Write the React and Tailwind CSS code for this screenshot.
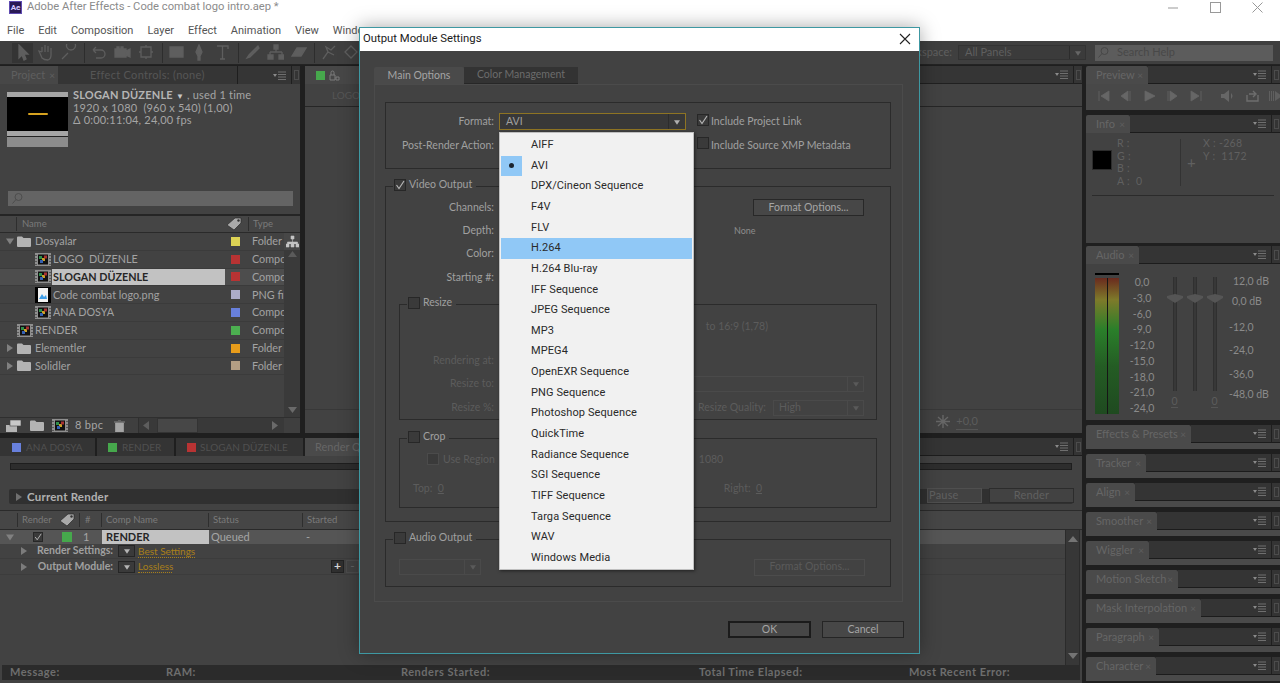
import React from "react";

const Tri = ({ dir = "r", c = "#7d7d7d", s = 8 }) => (
  <svg width={s} height={s} viewBox="0 0 8 8" className="shrink-0">
    {dir === "r" ? <path d="M1 0 L7 4 L1 8Z" fill={c} /> : <path d="M0 1.5 L8 1.5 L4 7.5Z" fill={c} />}
  </svg>
);

const MenuGlyph = () => (
  <svg width="14" height="9" viewBox="0 0 14 9" className="shrink-0">
    <path d="M0 3 L4 3 L2 6Z" fill="#8a8a8a" />
    <path d="M5 1h8M5 3.5h8M5 6h8M5 8.5h8" stroke="#6f6f6f" strokeWidth="1" />
  </svg>
);

const Grip = () => (
  <div className="w-[9px] h-full border-l border-[#1f1f1f] flex items-center justify-center shrink-0 ml-[4px]">
    <div className="w-[5px] h-[10px] border border-[#4c4c4c]" />
  </div>
);

const PanelTab = ({ w, children }) => (
  <div className="flex h-[18px] shrink-0 bg-[#1f1f1f]">
    <div className="bg-[#4a4a4a] rounded-t-[2px] h-[18px] flex items-center pl-[10px] shrink-0 text-[#666666] text-[11px] whitespace-nowrap" style={{ width: w }}>
      {children}
      <span className="ml-auto mr-[5px] text-[#5e5e5e] text-[10px]">×</span>
    </div>
    <div className="flex-1 bg-[#343434] border-b border-[#1c1c1c] flex items-center justify-end">
      <MenuGlyph />
      <Grip />
    </div>
  </div>
);

const RightStack = ({ title, w }) => (
  <div className="h-[24px] bg-[#4a4a4a] shrink-0 mb-[5px] overflow-hidden">
    <PanelTab w={w}>{title}</PanelTab>
  </div>
);

const Folder = () => (
  <svg width="14" height="11" viewBox="0 0 14 11" className="shrink-0">
    <path d="M0 1.5 Q0 .5 1 .5 H5 L6.5 2 H13 Q14 2 14 3 V10 Q14 11 13 11 H1 Q0 11 0 10Z" fill="#b4b4b4" />
  </svg>
);

const CompIcon = () => (
  <svg width="16" height="13" viewBox="0 0 16 13" className="shrink-0">
    <rect width="16" height="13" fill="#8f8f8f" />
    <rect x="3" y="1.5" width="10" height="10" fill="#111" />
    <rect x="4" y="3" width="3" height="3" fill="#2f8f4a" />
    <rect x="7" y="5" width="3" height="3" fill="#c9a227" />
    <rect x="9" y="2.5" width="3" height="3" fill="#a83232" />
    <rect x="5" y="7" width="3" height="3" fill="#3560b0" />
    <path d="M1 2v1M1 5v1M1 8v1M1 11v1M15 2v1M15 5v1M15 8v1M15 11v1" stroke="#222" />
  </svg>
);

const PngIcon = () => (
  <svg width="16" height="16" viewBox="0 0 16 16" className="shrink-0">
    <rect width="16" height="16" fill="#000" />
    <rect x="3" y="1" width="10" height="14" fill="#f2f2f2" />
    <path d="M4 12 L7 7 L9 10 L11 8 L12 12Z" fill="#3f9ee8" />
  </svg>
);

const TagIcon = () => (
  <svg width="16" height="14" viewBox="0 0 16 14" className="shrink-0">
    <path d="M1 8 L9 1 L15 1 L15 6 L8 13Z" fill="#a9a9a9" stroke="#2a2a2a" strokeWidth=".7" />
    <circle cx="12.5" cy="3.5" r="1.2" fill="#333" />
  </svg>
);

const ChkMark = ({ on, dim, size = 12 }) => (
  <span className={"inline-flex items-center justify-center shrink-0 bg-[#3a3a3a] border " + (dim ? "border-[#4b4b4b]" : "border-[#272727]")} style={{ width: size, height: size }}>
    {on && (
      <svg width="10" height="10" viewBox="0 0 10 10">
        <path d="M1.5 5 L4 8.5 L9 1" fill="none" stroke="#b5b5b5" strokeWidth="1.2" />
      </svg>
    )}
  </span>
);

const projectRows = [
  { t: "d", indent: 0, icon: "f", name: "Dosyalar", c: "#ddd355", type: "Folder" },
  { indent: 1, icon: "c", name: "LOGO  DÜZENLE", c: "#b83333", type: "Compo" },
  { indent: 1, icon: "c", name: "SLOGAN DÜZENLE", c: "#b83333", type: "Compo", sel: true },
  { indent: 1, icon: "p", name: "Code combat logo.png", c: "#acacc9", type: "PNG fil" },
  { indent: 1, icon: "c", name: "ANA DOSYA", c: "#6880dc", type: "Compo" },
  { indent: 0, icon: "c", name: "RENDER", c: "#4caf50", type: "Compo" },
  { t: "r", indent: 0, icon: "f", name: "Elementler", c: "#e89c1a", type: "Folder" },
  { t: "r", indent: 0, icon: "f", name: "Solidler", c: "#b39e84", type: "Folder" },
];

const ProjectPanel = () => (
  <div className="w-[300px] h-full bg-[#424242] flex flex-col shrink-0">
    <div className="flex h-[18px] shrink-0">
      <div className="w-[58px] bg-[#474747] flex items-center pl-[11px] text-[11px] text-[#5f5f5f]">Project<span className="ml-[4px] text-[10px]">×</span></div>
      <div className="w-[179px] bg-[#353535] flex items-center pl-[32px] text-[11px] text-[#555555] tracking-[0.3px] whitespace-nowrap">Effect Controls: (none)</div>
      <div className="flex-1 bg-[#353535] border-l border-[#1e1e1e] flex items-center justify-end"><MenuGlyph /><Grip /></div>
    </div>
    <div className="h-[99px] flex shrink-0 pl-[7px] pt-[8px] gap-[5px]">
      <div className="w-[61px] h-[55px] flex flex-col shrink-0">
        <div className="h-[5px] bg-[#a5a5a5]" />
        <div className="h-[34px] bg-black flex items-center justify-center"><div className="w-[20px] h-[2px] bg-[#d6a21f] rounded-full" /></div>
        <div className="h-[5px] bg-[#a5a5a5]" />
        <div className="h-[1px] bg-[#222222]" />
        <div className="h-[10px] bg-[#8c8c8c]" />
      </div>
      <div className="text-[11px] leading-[12px] text-[#a5a5a5] -mt-[3px] tracking-[0.2px] whitespace-pre">
        <div><b className="text-[#b5b5b5]">SLOGAN DÜZENLE</b> <span className="text-[8px] text-[#c8c8c8]">▼</span> , used 1 time</div>
        <div>1920 x 1080  (960 x 540) (1,00)</div>
        <div>Δ 0:00:11:04, 24,00 fps</div>
      </div>
    </div>
    <div className="h-[33px] shrink-0 pt-[8px] px-[8px] border-b-2 border-[#252525]">
      <div className="h-[15px] bg-[#646464] flex items-center pl-[3px] w-[285px]">
        <svg width="13" height="13" viewBox="0 0 13 13"><circle cx="7.5" cy="5" r="3.5" fill="none" stroke="#4d4d4d" /><path d="M5 7.5 L1.5 11.5" stroke="#4d4d4d" /></svg>
      </div>
    </div>
    <div className="h-[17px] flex items-center text-[9.5px] text-[#7a7a7a] bg-[#454545] border-b border-[#2a2a2a] shrink-0">
      <span className="pl-[5px] ml-[16px] border-l border-[#2e2e2e]">Name</span>
      <span className="ml-auto"><TagIcon /></span>
      <span className="ml-[6px] w-[52px] pl-[4px] border-l border-[#2e2e2e]">Type</span>
    </div>
    <div className="flex-1 flex min-h-0">
      <div className="w-[284px] flex flex-col shrink-0">
        {projectRows.map((r) => (
          <div key={r.name} className={"h-[17.8px] flex items-center border-b border-[#3b3b3b] text-[10.8px] text-[#a3a3a3] shrink-0 whitespace-pre " + (r.sel ? "bg-[#4d4d4d]" : "")}>
            <div className={r.indent ? "w-[35px] shrink-0" : "w-[17px] shrink-0"}>
              {r.t && !r.indent && <span className="flex pl-[6px]"><Tri dir={r.t} c="#808080" /></span>}
            </div>
            <div className="w-[17px] flex justify-start shrink-0">
              {r.icon === "f" ? <Folder /> : r.icon === "c" ? <CompIcon /> : <PngIcon />}
            </div>
            <div className={"h-full flex items-center pl-[1px] shrink-0 " + (r.indent ? "w-[173px] " : "w-[191px] ") + (r.sel ? "bg-[#c2c2c2] text-[#262626] font-bold" : "")}>{r.name}</div>
            <div className="w-[21px] flex justify-center shrink-0"><span className="w-[9px] h-[9px]" style={{ background: r.c }} /></div>
            <div className="overflow-hidden w-[38px] pl-[6px]">{r.type}</div>
          </div>
        ))}
      </div>
      <div className="flex-1 bg-[#3a3a3a] flex flex-col items-center justify-between pb-[4px]">
        <div className="w-full bg-[#474747] h-[17px] flex items-center justify-center">
          <svg width="13" height="13" viewBox="0 0 13 13"><path d="M5 1h3v3H5zM0 9h3v3H0zM5 9h3v3H5zM10 9h3v3h-3zM6.5 4v3M1.5 9V7h10v2" fill="#c5c5c5" stroke="#c5c5c5" strokeWidth=".6" /></svg>
        </div>
        <svg width="9" height="6" viewBox="0 0 9 6" className="-mt-[150px]"><path d="M0 6 L4.5 0 L9 6Z" fill="#5a5a5a" /></svg>
        <svg width="9" height="6" viewBox="0 0 9 6"><path d="M0 0 L9 0 L4.5 6Z" fill="#6a6a6a" /></svg>
      </div>
    </div>
    <div className="h-[16px] shrink-0 flex items-center bg-[#3f3f3f] border-t border-[#2f2f2f] pl-[6px]">
      <svg width="15" height="12" viewBox="0 0 15 12"><rect y="5" width="11" height="7" fill="#b5b5b5" /><rect x="4" width="11" height="6" fill="#c9c9c9" stroke="#444" strokeWidth=".6" /></svg>
      <span className="ml-[9px]"><Folder /></span>
      <span className="ml-[8px]"><CompIcon /></span>
      <span className="ml-[7px] w-[31px] text-[11px] text-[#a5a5a5] whitespace-nowrap tracking-[0.3px]">8 bpc</span>
      <svg width="11" height="12" viewBox="0 0 11 12" className="ml-[8px]"><path d="M0 2h11M4 0h3M1.5 3h8v9h-8z" fill="#a5a5a5" stroke="#a5a5a5" strokeWidth=".7" /></svg>
      <div className="ml-[13px] w-[146px] h-full flex items-center bg-[#393939] border-l border-[#2f2f2f]">
        <span className="ml-[4px]"><svg width="6" height="9" viewBox="0 0 6 9"><path d="M6 0 L0 4.5 L6 9Z" fill="#5d5d5d" /></svg></span>
        <div className="ml-[8px] w-[41px] h-full bg-[#474747] border border-[#333333]" />
        <span className="ml-auto mr-[6px]"><svg width="6" height="9" viewBox="0 0 6 9"><path d="M0 0 L6 4.5 L0 9Z" fill="#6a6a6a" /></svg></span>
      </div>
    </div>
  </div>
);

const ViewerPanel = () => (
  <div className="flex-1 h-full bg-[#424242] flex flex-col ml-[5px] min-w-0">
    <div className="flex h-[18px] shrink-0">
      <div className="w-[240px] bg-[#474747] flex items-center pl-[11px]">
        <span className="w-[9px] h-[9px] bg-[#46a84c]" />
        <svg width="11" height="11" viewBox="0 0 11 11" className="ml-[4px]"><path d="M1 5h5v5H1zM2 5V2.5a1.5 1.5 0 0 1 3 0V5M7 7h3v3H7z" fill="none" stroke="#7d7d7d" /></svg>
      </div>
      <div className="flex-1 bg-[#353535] flex items-center justify-end border-b border-[#202020]"><MenuGlyph /><Grip /></div>
    </div>
    <div className="h-[23px] shrink-0 border-b border-[#262626] text-[10px] text-[#565656] pl-[27px] flex items-center">LOGO</div>
    <div className="flex-1" />
    <div className="h-[24px] shrink-0 border-t border-[#383838] flex items-center justify-end pr-[104px] text-[11px] text-[#5c5c5c]">
      <svg width="14" height="13" viewBox="0 0 14 13" className="mr-[6px]"><path d="M7 0v13M0 6.5h14M2 2l10 9M12 2L2 11" stroke="#666" strokeWidth="1.4" /></svg>
      <span className="border-b border-[#555555]">+0,0</span>
    </div>
  </div>
);

const QueueRowLabel = ({ label, link }) => (
  <div className={"flex items-center border-b border-[#3c3c3c] text-[11px] shrink-0 " + (label === "Output Module:" ? "h-[16px]" : "h-[15px]")}>
    <span className="pl-[20px] w-[32px] shrink-0"><Tri c="#7c7c7c" /></span>
    <span className="w-[81px] shrink-0 text-right font-bold text-[10.5px] text-[#a0a0a0] whitespace-nowrap">{label}</span>
    <span className="ml-[5px] w-[17px] h-[12px] bg-[#3a3a3a] border border-[#252525] flex items-center justify-center shrink-0"><Tri dir="d" c="#b5b5b5" s={6} /></span>
    <span className={"ml-[3px] text-[10px] text-[#a87f1a] border-b border-dotted border-[#a87f1a] leading-[12px] whitespace-nowrap " + (label === "Output Module:" ? "w-[34px]" : "")}>{link}</span>
    {label === "Output Module:" && (
      <span className="ml-[159px] flex gap-[2px] shrink-0">
        <span className="w-[13px] h-[13px] bg-[#2f2f2f] border border-[#222222] text-[#d8d8d8] text-[12px] leading-[10px] font-bold text-center">+</span>
        <span className="w-[13px] h-[13px] border border-[#4c4c4c] text-[#666666] text-[12px] leading-[10px] text-center">-</span>
      </span>
    )}
  </div>
);

const BottomPanel = () => (
  <div className="h-[245px] mt-[5px] shrink-0 flex flex-col bg-[#424242]">
    <div className="h-[18px] flex shrink-0 bg-[#1f1f1f]">
      <div className="w-[95px] mr-[2px] bg-[#343434] flex items-center pl-[12px] text-[10px] text-[#505050] whitespace-nowrap shrink-0">
        <span className="w-[9px] h-[9px] mr-[5px] shrink-0 bg-[#6880dc]" />ANA DOSYA
      </div>
      <div className="w-[77px] mr-[2px] bg-[#343434] flex items-center pl-[11px] text-[10px] text-[#505050] whitespace-nowrap shrink-0">
        <span className="w-[9px] h-[9px] mr-[5px] shrink-0 bg-[#46a84c]" />RENDER
      </div>
      <div className="w-[127px] mr-[2px] bg-[#343434] flex items-center pl-[11px] text-[10px] text-[#505050] whitespace-nowrap shrink-0">
        <span className="w-[9px] h-[9px] mr-[4px] shrink-0 bg-[#b83333]" />SLOGAN DÜZENLE
      </div>
      <div className="w-[160px] bg-[#4a4a4a] pl-[10px] flex items-center text-[11px] text-[#666666] shrink-0 whitespace-nowrap">Render Queue</div>
      <div className="flex-1 bg-[#343434] border-b border-[#1d1d1d] flex items-center justify-end"><MenuGlyph /><Grip /></div>
    </div>
    <div className="h-[7px] shrink-0" />
    <div className="h-[7px] mx-[10px] bg-[#2d2d2d] border border-[#1e1e1e] shrink-0" />
    <div className="h-[19px] shrink-0" />
    <div className="h-[15px] mx-[9px] bg-[#303030] rounded-[2px] shrink-0 flex items-center pl-[6px] gap-[4px] text-[11.5px] font-bold text-[#b0b0b0] tracking-[0.2px] relative">
      <Tri c="#707070" />Current Render
      <div className="absolute right-[-1px] top-[-1px] flex gap-[7px] text-[11px] font-normal text-[#606060]">
        <span className="w-[55px] h-[15px] border border-[#4f4f4f] bg-[#424242] flex items-center pl-[1px]">Pause</span>
        <span className="w-[85px] h-[15px] border border-[#2c2c2c] bg-[#424242] flex items-center justify-center">Render</span>
      </div>
    </div>
    <div className="h-[7px] shrink-0 border-b border-[#2b2b2b]" />
    <div className="h-[19px] shrink-0 bg-[#464646] border-b border-[#2a2a2a] flex items-center text-[9.5px] text-[#7a7a7a] whitespace-nowrap">
      <span className="ml-[17px] w-[40px] pl-[4px] border-l border-[#2e2e2e]">Render</span>
      <span className="ml-[2px]"><TagIcon /></span>
      <span className="ml-[4px] w-[22px] pl-[5px] border-l border-[#2e2e2e]">#</span>
      <span className="w-[107px] pl-[4px] border-l border-[#2e2e2e]">Comp Name</span>
      <span className="w-[94px] pl-[4px] border-l border-[#2e2e2e]">Status</span>
      <span className="pl-[4px] border-l border-[#2e2e2e]">Started</span>
    </div>
    <div className="flex-1 flex min-h-0">
      <div className="flex-1 min-w-0 flex flex-col">
        <div className="h-[14px] bg-[#555555] flex items-center text-[11px] text-[#a5a5a5] shrink-0">
          <span className="pl-[6px] w-[33px] shrink-0"><Tri dir="d" c="#808080" /></span>
          <ChkMark on size={10} />
          <span className="ml-[19px] w-[10px] h-[10px] bg-[#46a84c] shrink-0" />
          <span className="ml-[11px] w-[19px]">1</span>
          <span className="w-[107px] h-full bg-[#c2c2c2] text-[#262626] font-bold flex items-center pl-[4px]">RENDER</span>
          <span className="ml-[2px] w-[95px]">Queued</span>
          <span>-</span>
        </div>
        <QueueRowLabel label="Render Settings:" link="Best Settings" />
        <QueueRowLabel label="Output Module:" link="Lossless" />
        <div className="flex-1" />
      </div>
      <div className="w-[15px] bg-[#373737] border-x border-[#2b2b2b] flex flex-col items-center justify-between py-[6px] mr-[2px] shrink-0">
        <svg width="10" height="6" viewBox="0 0 10 6"><path d="M0 6 L5 0 L10 6Z" fill="#747474" /></svg>
        <svg width="10" height="6" viewBox="0 0 10 6"><path d="M0 0 L10 0 L5 6Z" fill="#747474" /></svg>
      </div>
    </div>
    <div className="h-[15px] bg-[#2b2b2b] mx-[2px] mb-[3px] shrink-0 flex items-center text-[11px] font-bold text-[#6e6e6e] whitespace-nowrap tracking-[0.5px]">
      <span className="pl-[8px] w-[164px]">Message:</span>
      <span className="w-[235px]">RAM:</span>
      <span className="w-[298px]">Renders Started:</span>
      <span className="w-[210px]">Total Time Elapsed:</span>
      <span>Most Recent Error:</span>
    </div>
  </div>
);

const Transport = () => (
  <div className="flex items-center h-[24px] pl-[12px] text-[#666666]">
    {[
      "M1 1v10M11 1 L3 6 L11 11Z", "M9 1v10M7 1 L0 6 L7 11Z", "M1 1 L11 6 L1 11Z", "M1 1v10M3 1 L10 6 L3 11Z", "M11 1v10M1 1 L9 6 L1 11Z",
    ].map((d, i) => (
      <svg key={i} width="12" height="12" viewBox="0 0 12 12" className="mr-[11px] shrink-0"><path d={d} fill="#666666" stroke="#666666" strokeWidth=".8" /></svg>
    ))}
    <svg width="13" height="12" viewBox="0 0 13 12" className="ml-[8px] shrink-0"><path d="M0 4h3L8 0v12L3 8H0zM10 3q3 3 0 6" fill="#666666" /></svg>
    <svg width="13" height="12" viewBox="0 0 13 12" className="ml-[12px] shrink-0"><path d="M1 5v6h11V5M3 4h6M7 1l3 3-3 3" fill="none" stroke="#6e6e6e" strokeWidth="1.4" /></svg>
    <svg width="13" height="12" viewBox="0 0 13 12" className="ml-[10px] shrink-0"><path d="M0 1h1v10H0zM2 1h1v10H2zM4 1h1v10H4zM6 1l7 5-7 5z" fill="#5f5f5f" /></svg>
  </div>
);

const RightColumn = () => (
  <div className="w-[194px] h-full ml-[4px] flex flex-col shrink-0">
    <div className="h-[44px] bg-[#484848] mb-[5px] shrink-0">
      <PanelTab w={62}>Preview</PanelTab>
      <Transport />
    </div>
    <div className="h-[128px] bg-[#424242] mb-[3px] shrink-0">
      <PanelTab w={44}>Info</PanelTab>
      <div className="flex h-[63px] mx-[6px] border-b border-[#2b2b2b] text-[#606060] text-[10.5px] tracking-[0.3px]">
        <div className="w-[20px] h-[20px] bg-black border border-[#2c2c2c] mt-[17px] shrink-0" />
        <div className="ml-[5px] pt-[4px] leading-[12.5px] w-[63px] shrink-0 whitespace-pre">
          <div>R :</div><div>G :</div><div>B :</div><div>A :  0</div>
        </div>
        <div className="border-l border-[#333333] h-[47px] mt-[6px] pl-[6px] pt-[15px] w-[23px] shrink-0 text-[15px] leading-[16px]">+</div>
        <div className="pt-[4px] leading-[12.5px] whitespace-pre">
          <div>X : -268</div><div>Y :  1172</div>
        </div>
      </div>
    </div>
    <div className="h-[174px] bg-[#424242] mb-[5px] shrink-0">
      <PanelTab w={53}>Audio</PanelTab>
      <div className="flex h-[156px] text-[10.5px] text-[#8a8a8a] whitespace-nowrap">
        <div className="ml-[9px] w-[24px] shrink-0 pt-[9px]">
          <div className="h-[2px] bg-black" />
          <div className="mt-[3px] h-[136px] relative bg-[linear-gradient(180deg,#6a2a1e_0%,#7e7a2a_16%,#2a7f2a_38%,#245c24_65%,#1f4a20_100%)] flex justify-center">
            <div className="w-[1px] bg-[#161616]" />
          </div>
        </div>
        <div className="w-[30px] ml-[8px] shrink-0 pt-[12px] h-[150px] flex flex-col justify-between items-center leading-[12px]">
          {["0,0", "-3,0", "-6,0", "-9,0", "-12,0", "-15,0", "-18,0", "-21,0", "-24,0"].map((n) => <span key={n}>{n}</span>)}
        </div>
        <div className="flex ml-[15px] gap-[15px] pt-[13px] shrink-0">
          {[0, 1, 2].map((i) => (
            <div key={i} className="w-[5px] flex flex-col items-center">
              <div className="h-[114px] w-[4px] bg-[#383838] border-x border-[#303030] relative">
                <svg width="16" height="9" viewBox="0 0 16 9" className="absolute left-[-7px] top-[17px]"><path d="M0 2 L8 0 L16 2 L16 4 L8 9 L0 4Z" fill="#555555" /></svg>
              </div>
              {i !== 1 && <span className="mt-[5px] text-[#5c5c5c] border-b border-[#555555] leading-[11px]">0</span>}
            </div>
          ))}
        </div>
        <div className="ml-[12px] pt-[11px] leading-[12px] shrink-0">
          <div className="pl-[4px] h-[20px]">12,0 dB</div>
          <div className="pl-[3px] h-[26px]">0,0 dB</div>
          <div className="h-[23px]">-12,0</div>
          <div className="h-[24px]">-24,0</div>
          <div className="h-[20px]">-36,0</div>
          <div>-48,0 dB</div>
        </div>
      </div>
    </div>
    <RightStack title="Effects & Presets" w={105} />
    <RightStack title="Tracker" w={60} />
    <RightStack title="Align" w={49} />
    <RightStack title="Smoother" w={71} />
    <RightStack title="Wiggler" w={63} />
    <RightStack title="Motion Sketch" w={92} />
    <RightStack title="Mask Interpolation" w={115} />
    <RightStack title="Paragraph" w={73} />
    <RightStack title="Character" w={70} />
  </div>
);

const toolIcons = [
  ["M5 1 L5 14 L8 11 L10 16 L12 15 L10 10 L14 10Z", 1, true],
  ["M5 8V3M8 8V1M11 8V2M14 9V4M5 8 L2 7 L5 14 Q7 16 11 16 Q14 15 14 11V9", 0],
  ["M11 6a4.5 4.5 0 1 0-.01 0M8 9 L2 15", 0],
  ["M3 6h8a4 4 0 0 1 0 8H6M3 6 L6 3M3 6 L6 9", 0],
  ["M1 5h11v8H1zM12 7l4-2v8l-4-2zM3 3h2v2H3zM7 3h2v2H7z", 1],
  ["M3 3h10v10H3zM1 8h2M13 8h2M8 1v2M8 13v2", 0],
  ["M2 3h13v10H2z", 1],
  ["M8 1 L11 8 L9 12H7L5 8ZM7 13h2v3H7z", 1],
  ["M3 2h11v3M8.5 2v13M6 15h5", 0],
  ["M14 2 L5 11 L3 14 L6 13 L15 4Z", 1],
  ["M7 1h4v4H7zM9 5v3M3 8h12M3 8v3M15 8v3M1 11h5v4H1zM12 11h5v4h-5z", 1],
  ["M7 4h9l-5 8H2Z", 1],
  ["M3 15 L8 8 L6 3 L11 6 L15 2 M8 8 L14 11", 0],
  ["M2 8 L8 2 L14 8 L8 14Z", 0],
];

const ToolIcon = ({ d, fill, active }) => (
  <span className={"w-[21px] h-[20px] flex items-center justify-center shrink-0 " + (active ? "bg-[#343434]" : "")}>
    <svg width="17" height="17" viewBox="0 0 17 17"><path d={d} fill={fill ? "#5e5e5e" : "none"} stroke="#5e5e5e" strokeWidth="1.3" /></svg>
  </span>
);

const Toolbar = () => (
  <div className="h-[24px] bg-[#3f3f3f] flex items-center shrink-0 pl-[12px] border-b border-[#232323] whitespace-nowrap">
    <div className="flex gap-[2px] shrink-0">{toolIcons.slice(0, 3).map((t, i) => <ToolIcon key={i} d={t[0]} fill={t[1]} active={t[2]} />)}</div>
    <div className="flex gap-[3px] ml-[5px] pl-[3px] border-l border-[#2d2d2d] shrink-0">{toolIcons.slice(3, 6).map((t, i) => <ToolIcon key={i} d={t[0]} fill={t[1]} />)}</div>
    <div className="flex gap-[2px] ml-[5px] pl-[3px] border-l border-[#2d2d2d] shrink-0">{toolIcons.slice(6, 9).map((t, i) => <ToolIcon key={i} d={t[0]} fill={t[1]} />)}</div>
    <div className="flex gap-[2px] ml-[5px] pl-[3px] border-l border-[#2d2d2d] shrink-0">{toolIcons.slice(9, 12).map((t, i) => <ToolIcon key={i} d={t[0]} fill={t[1]} />)}</div>
    <div className="flex gap-[2px] ml-[5px] pl-[3px] border-l border-[#2d2d2d] shrink-0">{toolIcons.slice(12, 14).map((t, i) => <ToolIcon key={i} d={t[0]} fill={t[1]} />)}</div>
    <div className="ml-auto flex items-center shrink-0 pr-[7px]">
      <span className="text-[11px] text-[#5f5f5f] mr-[6px]">Workspace:</span>
      <div className="w-[128px] h-[15px] bg-[#3b3b3b] border border-[#333333] flex items-center pl-[6px] text-[11px] text-[#5f5f5f]">
        All Panels
        <span className="ml-auto w-[16px] h-[13px] border-l border-[#2c2c2c] flex items-center justify-center"><Tri dir="d" c="#666666" s={6} /></span>
      </div>
      <div className="ml-[9px] w-[178px] h-[16px] bg-[#5c5c5c] flex items-center pl-[2px] text-[11px] text-[#484848]">
        <svg width="13" height="13" viewBox="0 0 13 13" className="mr-[7px]"><circle cx="7.5" cy="5" r="3.5" fill="none" stroke="#474747" /><path d="M5 7.5 L1.5 11.5" stroke="#474747" /></svg>
        Search Help
      </div>
    </div>
  </div>
);

const formats = ["AIFF", "AVI", "DPX/Cineon Sequence", "F4V", "FLV", "H.264", "H.264 Blu-ray", "IFF Sequence", "JPEG Sequence", "MP3", "MPEG4", "OpenEXR Sequence", "PNG Sequence", "Photoshop Sequence", "QuickTime", "Radiance Sequence", "SGI Sequence", "TIFF Sequence", "Targa Sequence", "WAV", "Windows Media"];

const Dropdown = () => (
  <div className="absolute left-[139px] top-[104px] w-[195px] h-[438px] bg-[#f1f1f1] border border-[#bfbfbf] shadow-[1px_1px_3px_rgba(0,0,0,0.5)] px-[1px] pt-[2px] flex flex-col font-['Roboto',sans-serif] text-[11px] tracking-[0.1px] text-[#2a2a2a]">
    {formats.map((f) => (
      <div key={f} className={"h-[20.65px] flex items-center shrink-0 " + (f === "H.264" ? "bg-[#90c8f6]" : "")}>
        <span className={"w-[21px] h-full flex items-center justify-center shrink-0 " + (f === "AVI" ? "bg-[#90c8f6]" : "")}>
          {f === "AVI" && <span className="w-[5px] h-[5px] rounded-full bg-[#1b2530]" />}
        </span>
        <span className="pl-[9px] whitespace-nowrap">{f}</span>
      </div>
    ))}
  </div>
);

const Label = ({ children, w = "w-[108px]", dim }) => (
  <span className={w + " shrink-0 text-right whitespace-nowrap " + (dim ? "text-[#5c5c5c]" : "text-[#a0a0a0]")}>{children}</span>
);

const DimBtn = ({ children, dim }) => (
  <span className={"w-[111px] h-[17px] flex items-center justify-center shrink-0 border " + (dim ? "text-[#5a5a5a] border-[#4c4c4c] bg-[#424242]" : "text-[#a5a5a5] border-[#282828] bg-[#474747]")}>{children}</span>
);

const DimSel = ({ w, children }) => (
  <span className={w + " h-[16px] border border-[#4a4a4a] flex items-center pl-[5px] text-[#5c5c5c] shrink-0"}>
    {children}
    <span className="ml-auto w-[16px] h-[14px] border-l border-[#4a4a4a] flex items-center justify-center"><Tri dir="d" c="#5a5a5a" s={6} /></span>
  </span>
);

const Legend = ({ on, children }) => (
  <div className="absolute left-[7px] top-[-10px] flex items-center gap-[3px] bg-[#424242] pr-[4px] pl-[1px] text-[#a0a0a0]">
    <ChkMark on={on} />{children}
  </div>
);

const Dialog = () => (
  <div className="absolute left-[359px] top-[27px] w-[561px] h-[627px] bg-[#424242] border border-[#3e98a2] shadow-[0_0_18px_rgba(0,0,0,0.35)] flex flex-col font-['Lato',sans-serif] text-[10.5px]">
    <div className="h-[23px] bg-white flex items-center pl-[3px] pb-[1px] text-[11.3px] text-[#1a1a1a] font-['Roboto',sans-serif] shrink-0">
      Output Module Settings
      <svg width="12" height="12" viewBox="0 0 12 12" className="ml-auto mr-[8px]"><path d="M1 1 L11 11M11 1 L1 11" stroke="#222222" strokeWidth="1.1" /></svg>
    </div>
    <div className="flex ml-[14px] mt-[16px] h-[17px] shrink-0">
      <div className="w-[90px] bg-[#4a4a4a] flex items-center justify-center text-[#a5a5a5] rounded-t-[2px]">Main Options</div>
      <div className="w-[114px] bg-[#333333] flex items-center justify-center text-[#6c6c6c] border-b border-[#272727]">Color Management</div>
    </div>
    <div className="ml-[14px] w-[529px] h-[518px] border border-[#4b4b4b] pl-[10px] pr-[11px] pt-[17px] shrink-0">
      <div className="h-[67px] border border-[#2b2b2b] flex flex-col pt-[6px] text-[#a0a0a0]">
        <div className="h-[25px] flex items-center shrink-0">
          <Label>Format:</Label>
          <div className="ml-[5px] w-[187px] h-[17px] border border-[#8e7423] bg-[#383838] flex items-center pl-[6px] text-[#a0a0a0] shrink-0">
            AVI
            <span className="ml-auto w-[17px] h-[15px] border-l border-[#2c2c2c] flex items-center justify-center"><Tri dir="d" c="#b0b0b0" s={6} /></span>
          </div>
          <span className="ml-[11px]"><ChkMark on /></span>
          <span className="ml-[2px] whitespace-nowrap">Include Project Link</span>
        </div>
        <div className="h-[23px] flex items-center shrink-0">
          <Label>Post-Render Action:</Label>
          <span className="ml-[203px]"><ChkMark /></span>
          <span className="ml-[2px] whitespace-nowrap">Include Source XMP Metadata</span>
        </div>
      </div>
      <div className="mt-[17px] h-[336px] border border-[#2b2b2b] relative px-[13px] pt-[9px]">
        <Legend on>Video Output</Legend>
        <div className="h-[23px] flex items-center -ml-[13px]"><Label>Channels:</Label><span className="ml-auto -mr-[13px] pr-[26px]"><DimBtn>Format Options...</DimBtn></span></div>
        <div className="h-[23px] flex items-center -ml-[13px] text-[#8d8d8d]"><Label>Depth:</Label><span className="ml-[240px] text-[9px]">None</span></div>
        <div className="h-[24px] flex items-center -ml-[13px]"><Label>Color:</Label></div>
        <div className="h-[23px] flex items-center -ml-[13px]"><Label>Starting #:</Label></div>
        <div className="mt-[15px] h-[116px] border border-[#2b2b2b] relative text-[#5c5c5c]">
          <Legend>Resize</Legend>
          <div className="h-[44px] flex items-center justify-end pr-[108px] whitespace-nowrap">to 16:9 (1,78)</div>
          <div className="h-[23px] flex items-center"><Label w="w-[94px]" dim>Rendering at:</Label></div>
          <div className="h-[24px] flex items-center"><Label w="w-[94px]" dim>Resize to:</Label><span className="ml-auto pr-[12px]"><DimSel w="w-[180px]" /></span></div>
          <div className="h-[23px] flex items-center"><Label w="w-[94px]" dim>Resize %:</Label><span className="ml-auto whitespace-nowrap pr-[7px]">Resize Quality:</span><span className="pr-[12px]"><DimSel w="w-[91px]">High</DimSel></span></div>
        </div>
        <div className="mt-[18px] h-[70px] border border-[#2b2b2b] relative text-[#5c5c5c]">
          <Legend>Crop</Legend>
          <div className="h-[42px] pt-[13px] pl-[27px] flex items-start">
            <span className="mt-[1px]"><ChkMark dim /></span>
            <span className="ml-[4px]">Use Region</span>
            <span className="ml-[204px]">1080</span>
          </div>
          <div className="flex pl-[13px] whitespace-pre">
            <span>Top:  <u>0</u></span>
            <span className="ml-[280px]">Right:  <u>0</u></span>
          </div>
        </div>
      </div>
      <div className="mt-[17px] h-[48px] border border-[#2b2b2b] relative flex items-center px-[13px] gap-[7px] pt-[8px]">
        <Legend>Audio Output</Legend>
        <DimSel w="w-[82px]" />
        <span className="ml-auto pr-[12px]"><DimBtn dim>Format Options...</DimBtn></span>
      </div>
    </div>
    <div className="flex justify-end gap-[11px] pr-[15px] mt-[19px] shrink-0 text-[#a5a5a5]">
      <span className="w-[83px] h-[17px] bg-[#474747] border-2 border-[#1b1b1b] flex items-center justify-center">OK</span>
      <span className="w-[82px] h-[17px] bg-[#474747] border border-[#252525] flex items-center justify-center">Cancel</span>
    </div>
    <Dropdown />
  </div>
);

export default function App() {
  return (
    <div className="relative w-[1280px] h-[683px] overflow-hidden bg-[#1f1f1f] flex flex-col font-['Lato',sans-serif]">
      <div className="bg-white h-[41px] shrink-0 flex flex-col font-['Roboto',sans-serif]">
        <div className="h-[15px] flex items-center pl-[9px] text-[11.2px] text-[#8b8b8b] shrink-0">
          <span className="w-[13px] h-[13px] bg-[#2a1a55] border border-[#5f4bb0] text-[8px] leading-[11px] text-[#d6c9ff] font-bold text-center mr-[5px] shrink-0">Ae</span>
          Adobe After Effects - Code combat logo intro.aep *
          <div className="ml-auto flex items-center gap-[31px] pr-[17px]">
            <svg width="11" height="11" viewBox="0 0 11 11"><path d="M0 6h10" stroke="#999999" /></svg>
            <svg width="11" height="11" viewBox="0 0 11 11"><rect x=".5" y=".5" width="10" height="10" fill="none" stroke="#999999" /></svg>
            <svg width="11" height="11" viewBox="0 0 11 11"><path d="M.5 .5 L10.5 10.5M10.5 .5 L.5 10.5" stroke="#999999" /></svg>
          </div>
        </div>
        <div className="h-[26px] flex items-center pl-[7px] pt-[6px] gap-[14px] text-[11px] text-[#555555] shrink-0">
          {["File", "Edit", "Composition", "Layer", "Effect", "Animation", "View", "Window"].map((m) => <span key={m}>{m}</span>)}
        </div>
      </div>
      <Toolbar />
      <div className="flex-1 flex pt-[1px] min-h-0">
        <div className="w-[1082px] flex flex-col shrink-0">
          <div className="h-[367px] flex shrink-0">
            <ProjectPanel />
            <ViewerPanel />
          </div>
          <BottomPanel />
        </div>
        <RightColumn />
      </div>
      <Dialog />
    </div>
  );
}
